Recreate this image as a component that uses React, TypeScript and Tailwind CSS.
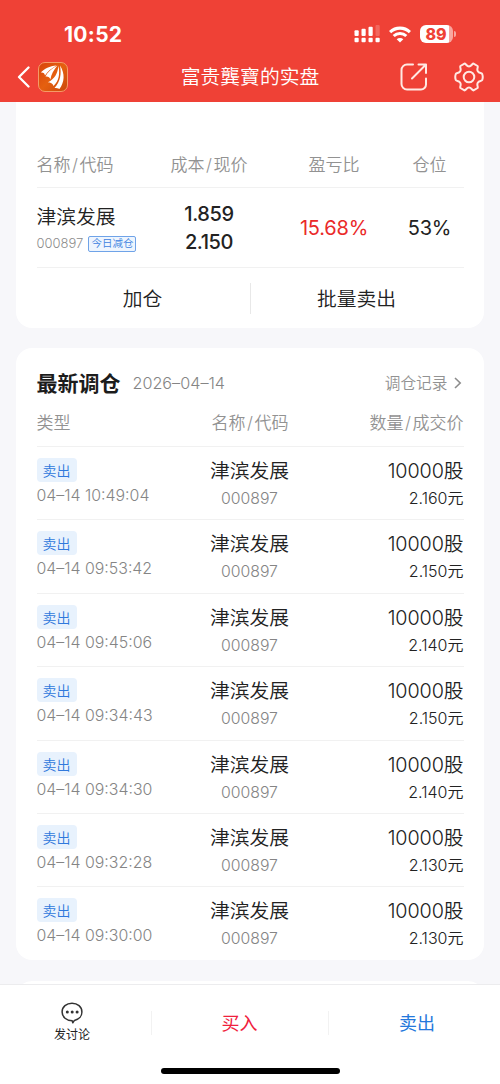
import type { ReactNode } from 'react';

type Trade = {
  time: string;
  price: string;
};

const trades: Trade[] = [
  { time: '04–14 10:49:04', price: '2.160元' },
  { time: '04–14 09:53:42', price: '2.150元' },
  { time: '04–14 09:45:06', price: '2.140元' },
  { time: '04–14 09:34:43', price: '2.150元' },
  { time: '04–14 09:34:30', price: '2.140元' },
  { time: '04–14 09:32:28', price: '2.130元' },
  { time: '04–14 09:30:00', price: '2.130元' },
];

function SignalIcon() {
  return (
    <svg width="26" height="18" viewBox="0 0 26 18" fill="#fff">
      <rect x="0.5" y="5.3" width="4.2" height="5.7" rx="1" />
      <rect x="7.5" y="3.8" width="4.2" height="7.2" rx="1" />
      <rect x="14.5" y="1.8" width="4.2" height="9.2" rx="1" />
      <rect x="21.5" y="0" width="4.2" height="11" rx="1" opacity="0.2" />
      <rect x="0.5" y="12.8" width="4.2" height="4.4" rx="1" />
      <rect x="7.5" y="12.8" width="4.2" height="4.4" rx="1" />
      <rect x="14.5" y="12.8" width="4.2" height="4.4" rx="1" />
      <rect x="21.5" y="12.8" width="4.2" height="4.4" rx="1" />
    </svg>
  );
}

function WifiIcon() {
  return (
    <svg width="22" height="17" viewBox="0 0 22 17" fill="none" stroke="#fff" strokeWidth="3.1">
      <path d="M1.1 6.1a14.2 14.2 0 0 1 19.8 0" />
      <path d="M4.7 10a9.1 9.1 0 0 1 12.6 0" />
      <path d="M11 16.6 7.7 13.3a4.7 4.7 0 0 1 6.6 0Z" fill="#fff" stroke="none" />
    </svg>
  );
}

function AppLogo() {
  return (
    <svg width="30" height="30" viewBox="0 0 30 30">
      <defs>
        <linearGradient id="logo" x1="0" y1="0" x2="1" y2="1">
          <stop offset="0" stopColor="#d8430c" />
          <stop offset="0.5" stopColor="#e5600f" />
          <stop offset="1" stopColor="#c9480c" />
        </linearGradient>
      </defs>
      <rect x="0.5" y="0.5" width="29" height="29" rx="6.5" fill="url(#logo)" stroke="#f59a68" />
      <g fill="#fff">
        <path d="M18.5 3.4C12 4.200 6 6.400 2.800 10.600c2.400-.4 3.800.6 4.200 2.900C9 9.800 13 6.600 18.500 3.400Z" />
        <path d="M19.400 3.600C13.200 7 9.300 10.600 7.500 14.600c2.300-.6 4.300.6 4.900 2.900C13.300 12.500 15.600 8.200 19.400 3.600Z" />
        <path d="M20.500 3.700c-1 8-3.600 12.900-10.600 16.600 2.700.1 4.800 1.300 5.600 3.600 5.300-4.700 6.600-11.600 5-20.200Z" />
        <path d="M22 3.500c1.600 8.300.4 15.900-5.500 22.600 2 0 3.500.4 4.900 1C26.600 20 27.200 11.700 22 3.500Z" />
      </g>
    </svg>
  );
}

function ShareIcon() {
  return (
    <svg width="28" height="28" viewBox="0 0 28 28" fill="none" stroke="#ffe9e3" strokeWidth="2" strokeLinecap="round" strokeLinejoin="round">
      <path d="M13 1.5H7A5.500 5.500 0 0 0 1.500 7v14A5.500 5.500 0 0 0 7 26.500h14a5 5 0 0 0 5-5v-6" />
      <path d="M18.500 1.500H26V10M25.500 2 12 15.500" />
    </svg>
  );
}

function SettingsIcon() {
  return (
    <svg width="30" height="30" viewBox="0 0 30 30" fill="none" stroke="#ffe9e3" strokeWidth="2" strokeLinejoin="round">
      <path d="M10.500 1.600C12 1.600 12.500 4.400 15 4.400S18 1.600 19.500 1.600L23.600 4C24.400 5.300 22.400 7 23.800 9.300S27.400 10.600 28.200 12Q29.300 15 28.200 18C27.400 19.400 25.200 18.400 23.800 20.700S24.400 24.700 23.600 26L19.500 28.400C18 28.400 17.500 25.600 15 25.600S12 28.400 10.500 28.400L6.400 26C5.600 24.700 7.600 23 6.200 20.700S2.600 19.400 1.800 18Q.7 15 1.800 12C2.600 10.600 4.800 11.600 6.200 9.300S5.600 5.300 6.400 4Z" />
      <circle cx="15" cy="15" r="5.3" />
    </svg>
  );
}

function ChatIcon() {
  return (
    <svg width="22" height="22" viewBox="0 0 22 22" fill="none" stroke="#333" strokeWidth="1.5" strokeLinejoin="round">
      <path d="M11 1.200c5.600 0 9.900 3.700 9.900 8.700 0 4.500-3.300 7.700-7.500 8.500L11.800 20.800 11.200 18.700C5.500 18.700 1.100 15 1.100 9.900c0-5 4.300-8.700 9.900-8.700Z" />
      <g fill="#333" stroke="none">
        <circle cx="6.3" cy="10" r="1.5" />
        <circle cx="11.2" cy="10" r="1.5" />
        <circle cx="16.1" cy="10" r="1.5" />
      </g>
    </svg>
  );
}

function Slash() {
  return <span className="px-[1.5px]">/</span>;
}

function Header() {
  return (
    <header className="h-[102px] shrink-0 bg-[#ef4136] text-white">
      <div className="flex h-[50px] items-end justify-between pr-[44px] pl-[64px]">
        <span className="mb-[3px] text-[21px] leading-6 font-bold tracking-[0.3px]">10:52</span>
        <div className="mb-[7px] flex items-center gap-[9px]">
          <SignalIcon />
          <WifiIcon />
          <div className="flex items-center gap-[1px]">
            <div className="flex h-[18px] w-[33px] items-center justify-center rounded-[6px] bg-gradient-to-r from-white from-88% to-[#f9a69f] to-88% pr-px text-[16px] leading-none font-extrabold text-[#ef4136]">
              89
            </div>
            <div className="h-[6px] w-[2px] rounded-r-full bg-[#f9a69f]" />
          </div>
        </div>
      </div>
      <div className="grid h-[52px] grid-cols-[1fr_auto_1fr] items-center pt-px pr-4 pl-[17px]">
        <div className="flex items-center gap-[8px]">
          <svg width="13" height="22" viewBox="0 0 13 22" fill="none" stroke="#fff" strokeWidth="2.3" strokeLinecap="round" strokeLinejoin="round">
            <path d="M11.5 1.5 2 11l9.5 9.5" />
          </svg>
          <AppLogo />
        </div>
        <h1 className="pt-px pr-px text-[19.8px] leading-7 font-[350]">富贵龔寶的实盘</h1>
        <div className="flex items-center justify-end gap-[26px]">
          <ShareIcon />
          <SettingsIcon />
        </div>
      </div>
    </header>
  );
}

function HoldingCard() {
  return (
    <section className="h-[226px] rounded-b-2xl bg-white px-[20.5px] pt-[40px]">
      <div className="grid h-[46px] grid-cols-[115px_115px_135px_56px] items-center border-b border-[#f1f1f1] pt-[2px] text-[17px] font-[350] text-[#929292]">
        <span>名称<Slash />代码</span>
        <span className="text-center">成本<Slash />现价</span>
        <span className="text-center">盈亏比</span>
        <span className="text-center">仓位</span>
      </div>
      <div className="grid h-[80px] grid-cols-[115px_115px_135px_56px] items-center border-b border-[#f1f1f1] text-[20px] text-[#222]">
        <div className="pt-[4px]">
          <div className="text-[19.8px] leading-7 font-[350]">津滨发展</div>
          <div className="flex h-[26px] items-center gap-[5px]">
            <span className="text-[13px] font-light text-[#8c8c8c]">000897</span>
            <span className="flex h-[16px] items-center rounded-[2px] border border-[#6fa3e8] bg-[#eef5fe] px-[2px] pt-px text-[10.5px] font-[350] whitespace-nowrap text-[#3d82e0]">
              今日减仓
            </span>
          </div>
        </div>
        <div className="text-center leading-7 font-[450] tracking-[-0.4px]">
          <div>1.859</div>
          <div>2.150</div>
        </div>
        <span className="pt-px text-center tracking-[-0.2px] text-[#ea2a2a]">15.68%</span>
        <span className="pt-px text-center tracking-[-0.2px]">53%</span>
      </div>
      <div className="flex h-[60px] items-center text-center text-[19.8px] font-[350] text-[#222]">
        <span className="flex-1 pt-[3px] pr-px">加仓</span>
        <span className="h-[31px] w-px bg-[#e8e8e8]" />
        <span className="flex-1 pt-[3px] pr-px">批量卖出</span>
      </div>
    </section>
  );
}

function TradeRow({ time, price }: Trade) {
  return (
    <li className="grid h-[73.4px] grid-cols-3 border-t border-[#f1f1f1] pt-[11px]">
      <div>
        <div className="flex h-[24px] w-[40px] items-center justify-center rounded-[4px] bg-[#e8f2fd] pt-px text-[14px] font-[350] text-[#3079dc]">
          卖出
        </div>
        <div className="mt-[2px] text-[15.9px] leading-6 font-light whitespace-nowrap text-[#858585]">{time}</div>
      </div>
      <div className="pr-px text-center">
        <div className="text-[19.8px] leading-[27px] font-[350] text-[#222]">津滨发展</div>
        <div className="text-[15.8px] leading-[27px] font-light text-[#858585]">000897</div>
      </div>
      <div className="text-right font-[350] text-[#222]">
        <div className="text-[19.8px] leading-[27px] tracking-[-0.1px]">10000股</div>
        <div className="text-[16px] leading-[26px]">{price}</div>
      </div>
    </li>
  );
}

function TradesCard() {
  return (
    <section className="mt-5 h-[612px] rounded-2xl bg-white px-[20.5px] pt-[21px]">
      <div className="flex h-[28px] items-center">
        <h2 className="pt-[2px] text-[21px] font-bold text-[#1c1c1c]">最新调仓</h2>
        <span className="ml-[12px] text-[16.2px] font-light text-[#858585]">2026–04–14</span>
        <span className="ml-auto pt-px text-[15.7px] font-[350] text-[#929292]">调仓记录</span>
        <svg className="mr-[2px] ml-[6px]" width="8" height="12" viewBox="0 0 8 12" fill="none" stroke="#8c8c8c" strokeWidth="1.6">
          <path d="m1 1 5.2 5L1 11" />
        </svg>
      </div>
      <div className="grid h-[49px] grid-cols-3 items-center pt-[5px] text-[17px] font-[350] text-[#929292]">
        <span>类型</span>
        <span className="text-center">名称<Slash />代码</span>
        <span className="text-right">数量<Slash />成交价</span>
      </div>
      <ul>
        {trades.map((t) => (
          <TradeRow key={t.time} {...t} />
        ))}
      </ul>
    </section>
  );
}

function ActionItem({ children }: { children: ReactNode }) {
  return <div className="flex items-center justify-center pr-px text-[18px]">{children}</div>;
}

function BottomBar() {
  return (
    <footer className="flex h-[100px] shrink-0 flex-col items-center border-t border-[#ececee] bg-white">
      <div className="grid h-[76px] w-full grid-cols-[151px_1px_176px_1px_177px] items-center">
        <div className="flex flex-col items-center pr-[7px]">
          <ChatIcon />
          <span className="mt-[2px] text-[12px] leading-[18px] text-[#222]">发讨论</span>
        </div>
        <span className="h-6 w-px bg-[#f2f2f2]" />
        <ActionItem>
          <span className="text-[#f0203c]">买入</span>
        </ActionItem>
        <span className="h-6 w-px bg-[#f2f2f2]" />
        <ActionItem>
          <span className="text-[#2478dc]">卖出</span>
        </ActionItem>
      </div>
      <div className="mt-[7px] h-[6px] w-[179px] rounded-full bg-black" />
    </footer>
  );
}

export default function App() {
  return (
    <div className="flex h-[1084px] w-[500px] flex-col overflow-hidden bg-[#f7f7fa] font-['Inter','Noto_Sans_CJK_SC',sans-serif]">
      <Header />
      <main className="min-h-0 flex-1 overflow-hidden px-4">
        <HoldingCard />
        <TradesCard />
        {/* top edge of the next card, cut off by the bottom bar */}
        <section className="mt-[21px] h-20 rounded-2xl bg-white" />
      </main>
      <BottomBar />
    </div>
  );
}
